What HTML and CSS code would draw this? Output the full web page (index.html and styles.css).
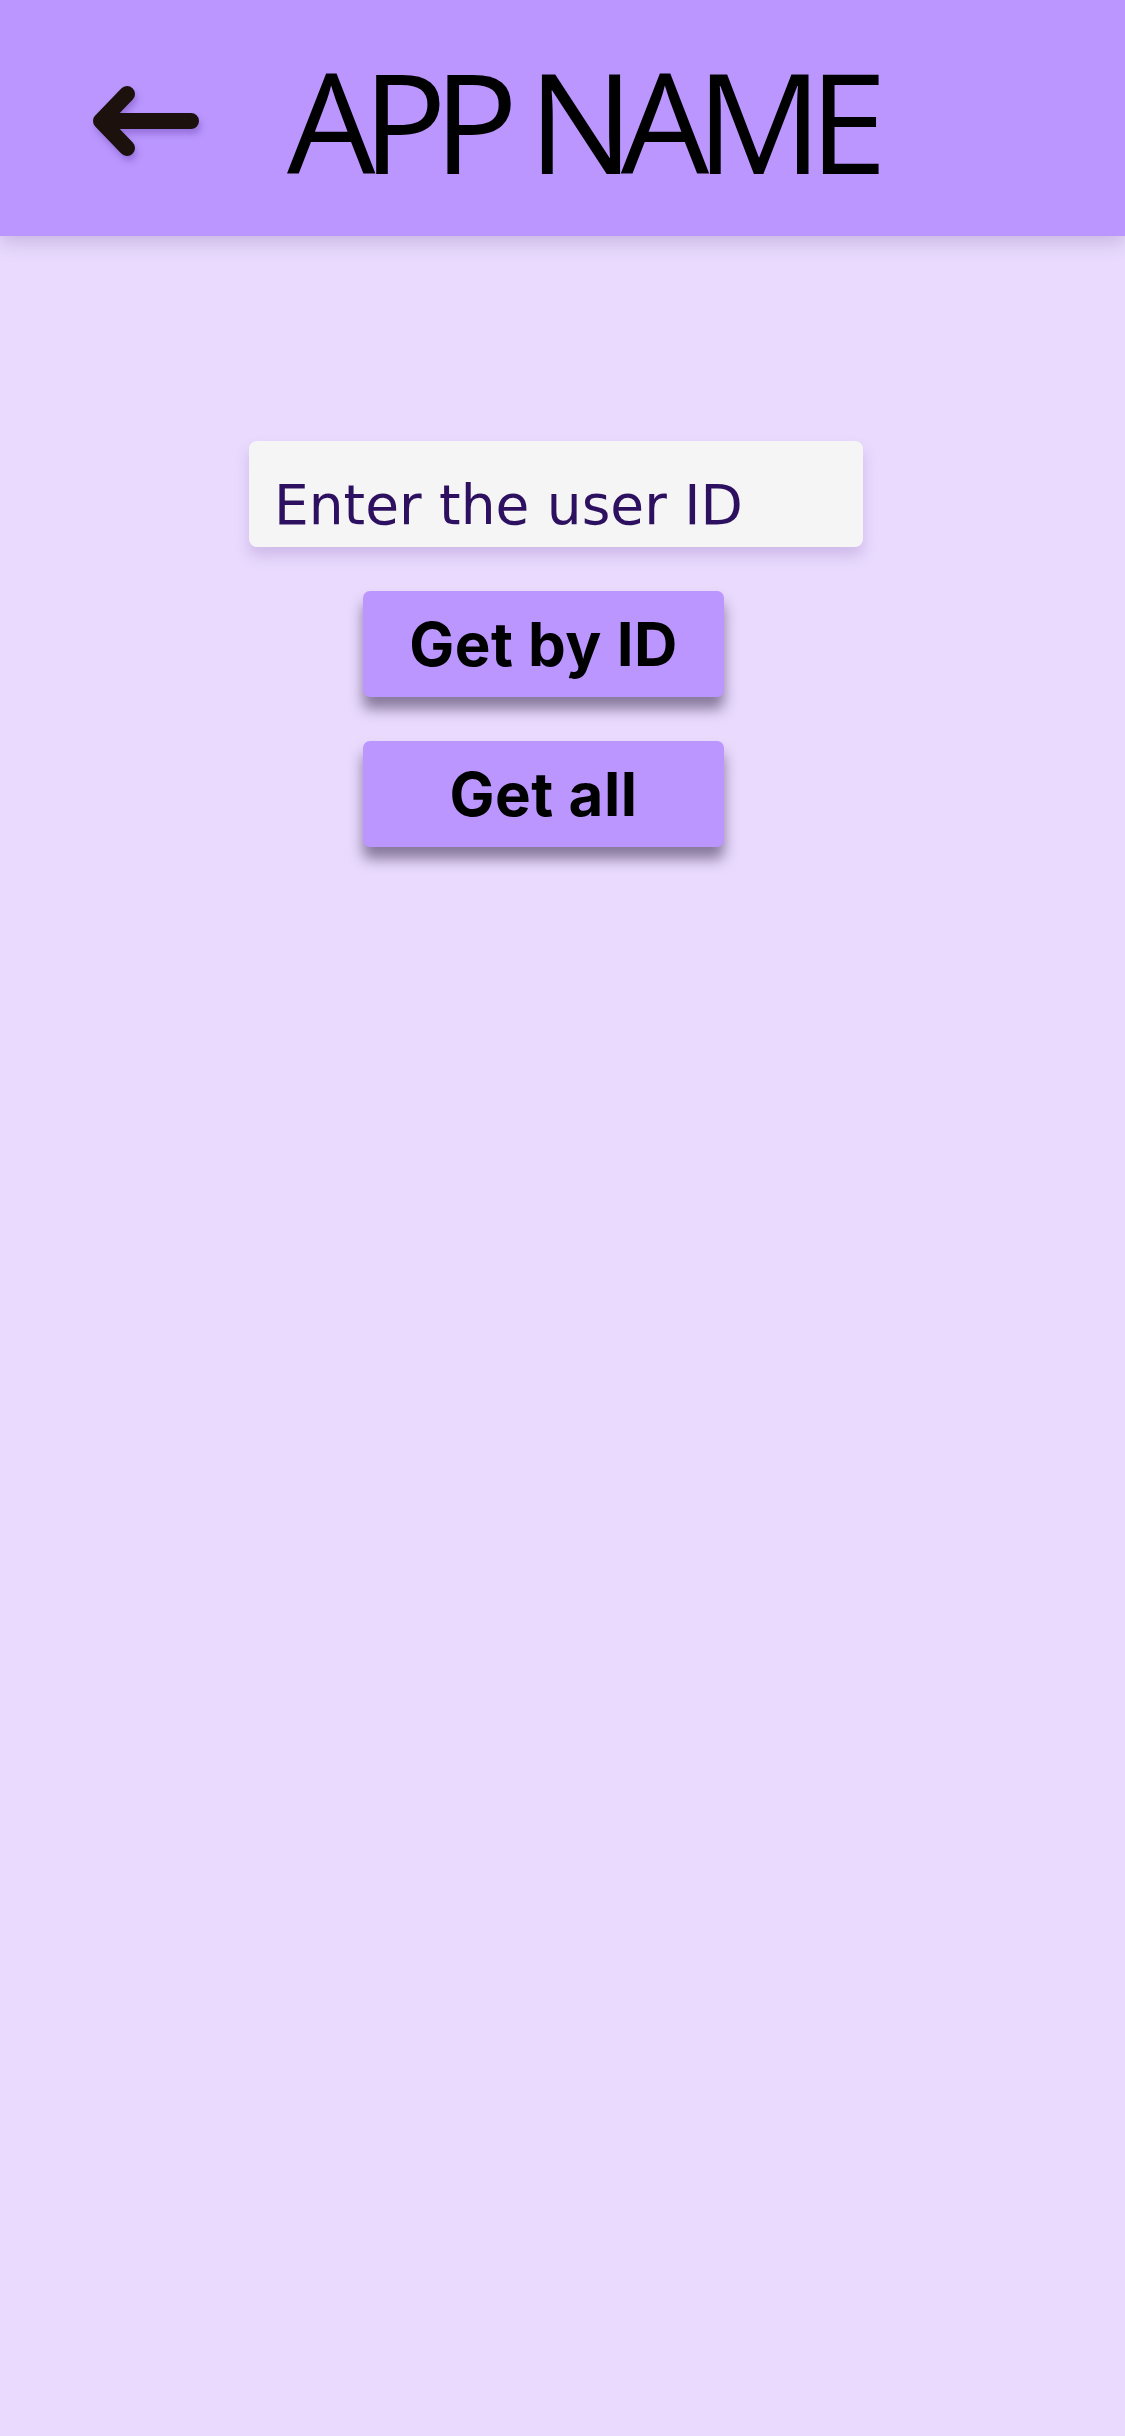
FILE: index.html
```html
<!DOCTYPE html>
<html>
<head>
<meta charset="utf-8">
<link rel="stylesheet" href="styles.css">
</head>
<body>
<header class="topbar">
  <svg class="back" width="130" height="90" viewBox="0 0 130 90">
    <path d="M47 21 L21 48 L47 75 M21 48 L111 48" fill="none" stroke="#1c110c" stroke-width="16" stroke-linecap="round" stroke-linejoin="round"/>
  </svg>
  <h1 class="title">APP NAME</h1>
</header>
<main class="content">
  <div class="field">Enter the user ID</div>
  <button class="btn">Get by ID</button>
  <button class="btn">Get all</button>
</main>
</body>
</html>
```
FILE: styles.css
```css
html, body {
  margin: 0;
  padding: 0;
  background: #e9dafe;
  min-height: 2436px;
}
.topbar {
  height: 236px;
  background: #ba96fe;
  display: flex;
  align-items: center;
  box-shadow: 0 6px 18px rgba(80, 50, 120, 0.22);
  position: relative;
}
.back {
  margin-left: 80px;
  flex: none;
  filter: drop-shadow(2px 5px 3px rgba(90, 50, 160, 0.35));
}
.title {
  margin: 4px 0 0 77px;
  font-family: "Open Sans", sans-serif;
  font-weight: 400;
  font-size: 140px;
  line-height: 1;
  letter-spacing: -13px;
  color: #000;
}
.content {
  display: flex;
  flex-direction: column;
  align-items: flex-start;
  padding: 205px 0 0 249px;
}
.field {
  box-sizing: border-box;
  width: 614px;
  height: 106px;
  background: #f5f5f5;
  border-radius: 8px;
  box-shadow: 0 9px 14px rgba(130, 95, 170, 0.25);
  padding: 37px 0 0 25px;
  font-family: "DejaVu Sans", sans-serif;
  font-size: 55px;
  line-height: 1;
  color: #2d1160;
}
.btn {
  margin: 44px 0 0 114px;
  width: 361px;
  height: 106px;
  border: none;
  border-radius: 7px;
  background: #ba96fe;
  box-shadow: 0 12px 14px rgba(40, 25, 60, 0.5);
  font-family: "Inter", sans-serif;
  font-weight: 700;
  font-size: 60px;
  letter-spacing: 0.5px;
  color: #000;
  padding: 0;
}
```
